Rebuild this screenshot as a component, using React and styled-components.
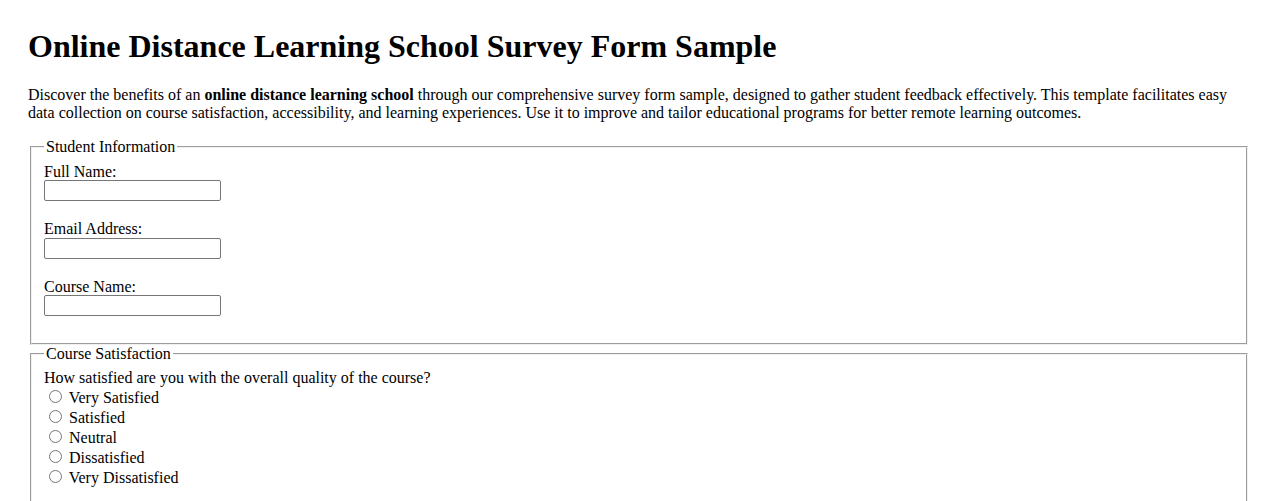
import React from 'react'
import styled, { createGlobalStyle } from 'styled-components'

const GlobalStyle = createGlobalStyle`
    body {
        margin: 0;
        background: #ffffff;
        color: #000000;
        font-family: "Liberation Serif", "Times New Roman", serif;
        font-size: 16px;
    }
`

const Page = styled.div`
    padding: 28px 28px 20px 28px;
`

const Title = styled.h1`
    font-size: 32px;
    font-weight: bold;
    margin: 0 0 21.44px 0;
`

const Intro = styled.p`
    margin: 0 0 16px 0;
`

const Section = styled.fieldset`
    margin: 0 2px;
    padding: 5.6px 12px 9px 12px;
    border: 2px groove rgb(240, 240, 240);
`

const Legend = styled.legend`
    padding: 0 2px;
`

const Field = styled.div`
    display: flex;
    flex-direction: column;
    align-items: flex-start;
    margin-bottom: 18px;
`

const Label = styled.label`
    line-height: 18.4px;
    margin-top: 1px;
    margin-bottom: -1px;
`

const TextInput = styled.input`
    box-sizing: border-box;
    width: 177px;
    height: 21px;
    padding: 1px 2px;
    border: 1px solid #767676;
    border-radius: 2px;
    font-family: "Liberation Sans", Arial, sans-serif;
    font-size: 13.33px;
`

const Question = styled.div`
    line-height: 18.4px;
`

const Option = styled.label`
    display: block;
`

const Radio = styled.input`
    margin: 3px 3px 0 5px;
    accent-color: #767676;
`

const OptionList = styled.div`
    margin-bottom: 18px;
`

const fields = [
    { id: 'fullName', label: 'Full Name:', type: 'text' },
    { id: 'email', label: 'Email Address:', type: 'email' },
    { id: 'course', label: 'Course Name:', type: 'text' },
]

const satisfaction = ['Very Satisfied', 'Satisfied', 'Neutral', 'Dissatisfied', 'Very Dissatisfied']

function App() {
    return (
        <Page>
            <GlobalStyle />
            <Title>Online Distance Learning School Survey Form Sample</Title>
            <Intro>
                Discover the benefits of an <b>online distance learning school</b> through our comprehensive survey
                form sample, designed to gather student feedback effectively. This template facilitates easy data
                collection on course satisfaction, accessibility, and learning experiences. Use it to improve and
                tailor educational programs for better remote learning outcomes.
            </Intro>
            <form>
                <Section>
                    <Legend>Student Information</Legend>
                    {fields.map(f => (
                        <Field key={f.id}>
                            <Label htmlFor={f.id}>{f.label}</Label>
                            <TextInput id={f.id} name={f.id} type={f.type} />
                        </Field>
                    ))}
                </Section>
                <Section>
                    <Legend>Course Satisfaction</Legend>
                    <Question>How satisfied are you with the overall quality of the course?</Question>
                    <OptionList>
                        {satisfaction.map(s => (
                            <Option key={s}>
                                <Radio type="radio" name="quality" value={s} /> {s}
                            </Option>
                        ))}
                    </OptionList>
                </Section>
            </form>
        </Page>
    )
}

export default App
